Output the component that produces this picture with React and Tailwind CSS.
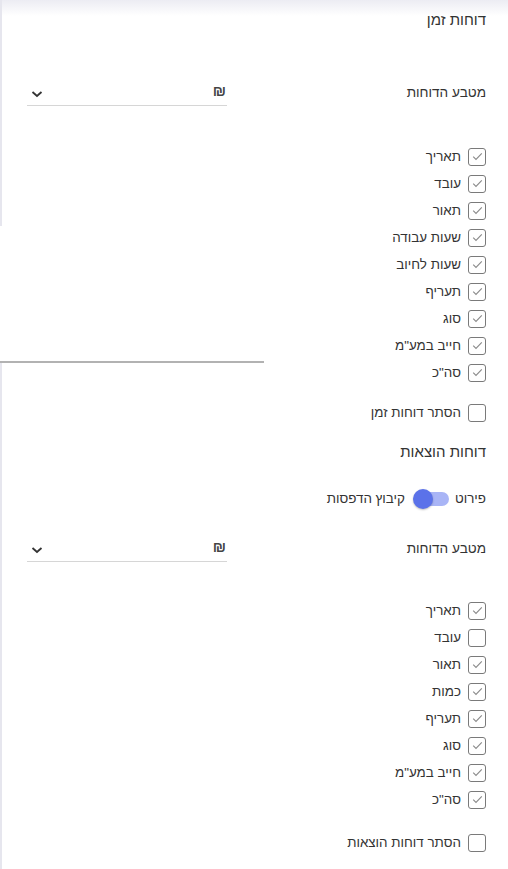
import React from "react";

function Check({ checked }) {
  return (
    <span className="w-[18px] h-[18px] rounded-[3px] border border-[#7a7a7a] flex items-center justify-center bg-white shrink-0">
      {checked && (
        <svg width="11" height="9" viewBox="0 0 11 9">
          <path d="M1.2 4.6 L4 7.4 L9.8 1.4" fill="none" stroke="#8a8a8a" strokeWidth="1.1" />
        </svg>
      )}
    </span>
  );
}

function Row({ label, checked }) {
  return (
    <div className="h-[27px] flex items-center gap-[7px]">
      <Check checked={checked} />
      <span className="text-[13.4px] leading-[18px] text-[#333]">{label}</span>
    </div>
  );
}

function SelectRow() {
  return (
    <div className="h-[26px] flex items-center justify-between">
      <span className="text-[13.6px] leading-[18px] text-[#333]">מטבע הדוחות</span>
      <div className="w-[200px] h-[26px] border-b border-[#d6d6d6] flex items-start justify-between pt-[3px] pr-[1px] pl-[3px]">
        <span className="text-[15px] leading-[15px] text-[#444] font-semibold">₪</span>
        <svg width="14" height="14" viewBox="0 0 14 14" className="mt-[4px]">
          <path d="M2.5 5 L7 9 L11.5 5" fill="none" stroke="#333" strokeWidth="1.8" />
        </svg>
      </div>
    </div>
  );
}

export default function App() {
  const timeItems = [
    ["תאריך", true],
    ["עובד", true],
    ["תאור", true],
    ["שעות עבודה", true],
    ["שעות לחיוב", true],
    ["תעריף", true],
    ["סוג", true],
    ["חייב במע\"מ", true],
    ["סה\"כ", true],
  ];
  const expItems = [
    ["תאריך", true],
    ["עובד", false],
    ["תאור", true],
    ["כמות", true],
    ["תעריף", true],
    ["סוג", true],
    ["חייב במע\"מ", true],
    ["סה\"כ", true],
  ];
  return (
    <div
      dir="rtl"
      className="relative w-[508px] min-h-[869px] bg-white overflow-hidden"
      style={{ fontFamily: '"Liberation Sans", Arial, sans-serif' }}
    >
      <div className="absolute top-0 left-0 right-0 h-[16px] bg-gradient-to-b from-[#ececf3] to-white" />
      <div className="absolute left-0 top-0 w-[2px] h-[226px] bg-[#e6e6ee]" />
      <div className="absolute left-0 top-[362px] bottom-0 w-[2px] bg-[#e6e6ee]" />
      <div className="absolute left-0 top-[361px] w-[264px] h-[2px] bg-[#b2b2b2]" />

      <div className="relative pr-[22px] pl-[27px] pt-[10px]">
        <div className="h-[20px] flex items-center text-[15px] text-[#333]">דוחות זמן</div>

        <div className="mt-[50px]">
          <SelectRow />
        </div>

        <div className="mt-[37px]">
          {timeItems.map(([l, c]) => (
            <Row key={l} label={l} checked={c} />
          ))}
        </div>

        <div className="mt-[13px]">
          <Row label="הסתר דוחות זמן" checked={false} />
        </div>

        <div className="mt-[16px] h-[20px] flex items-center text-[15px] text-[#333]">דוחות הוצאות</div>

        <div className="mt-[23px] h-[28px] flex items-center">
          <span className="text-[13.4px] text-[#333]">פירוט</span>
          <div className="w-[38px] h-[20px] flex items-center relative mr-[4px] ml-[8px]">
            <div className="w-[34px] h-[14px] rounded-full bg-[#a9b5f6] mr-[2px]" />
            <div className="absolute left-0 top-0 w-[20px] h-[20px] rounded-full bg-[#5b72e9] shadow-[0_1px_2px_rgba(0,0,0,0.25)]" />
          </div>
          <span className="text-[13.4px] text-[#333]">קיבוץ הדפסות</span>
        </div>

        <div className="mt-[23px]">
          <SelectRow />
        </div>

        <div className="mt-[35px]">
          {expItems.map(([l, c]) => (
            <Row key={l} label={l} checked={c} />
          ))}
        </div>

        <div className="mt-[16px]">
          <Row label="הסתר דוחות הוצאות" checked={false} />
        </div>
      </div>
    </div>
  );
}
